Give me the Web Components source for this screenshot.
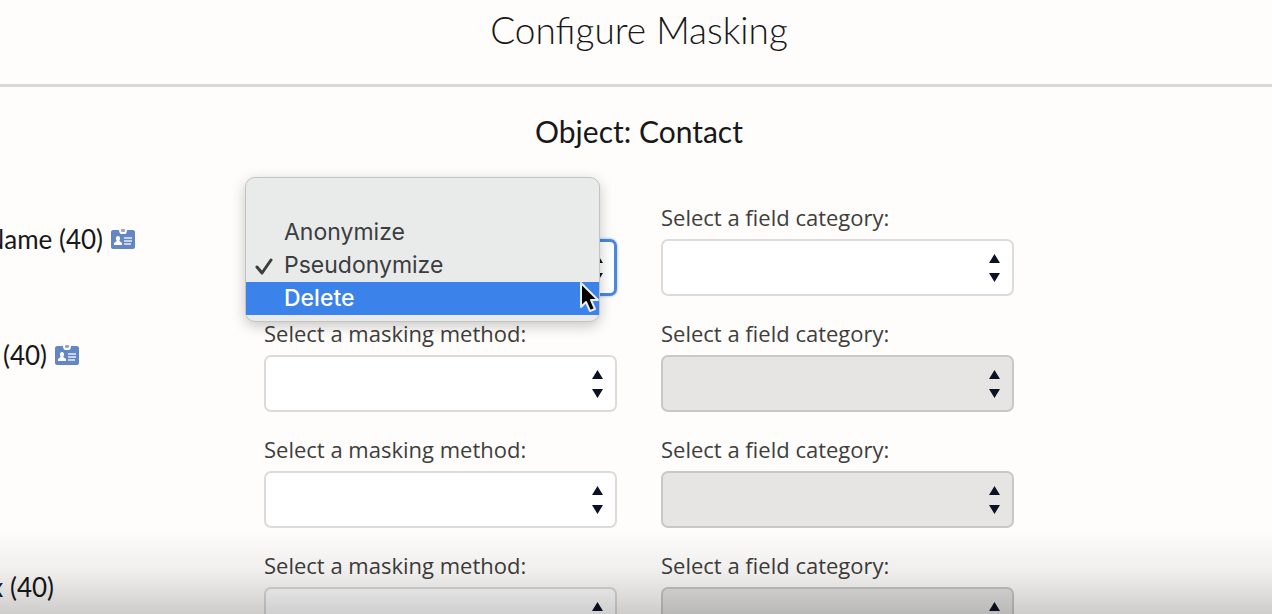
<!DOCTYPE html>
<html lang="en">
<head>
<meta charset="utf-8">
<title>Configure Masking</title>
<style>
  html, body {
    height: 100%;
  }

  body {
    margin: 0;
    overflow: hidden;
    background: #fefdfc;
    color: #181818;
    font-family: Lato, "Open Sans", sans-serif;
  }
</style>
</head>
<body>
<masking-page>
  <span slot="title">Configure Masking</span>
  <span slot="object">Object: Contact</span>

  <masking-row style="--name-width: 135px">
    <field-name slot="name" pii>Name (40)</field-name>
    <select-field slot="method" focused>
      <option-menu slot="menu">
        <menu-option></menu-option>
        <menu-option>Anonymize</menu-option>
        <menu-option checked>Pseudonymize</menu-option>
        <menu-option active>Delete</menu-option>
      </option-menu>
    </select-field>
    <select-field slot="category" label="Select a field category:"></select-field>
  </masking-row>

  <masking-row style="--name-width: 79px">
    <field-name slot="name" pii>(40)</field-name>
    <select-field slot="method" label="Select a masking method:"></select-field>
    <select-field slot="category" label="Select a field category:" disabled></select-field>
  </masking-row>

  <masking-row>
    <select-field slot="method" label="Select a masking method:"></select-field>
    <select-field slot="category" label="Select a field category:" disabled></select-field>
  </masking-row>

  <masking-row style="--name-width: 54px">
    <field-name slot="name">x (40)</field-name>
    <select-field slot="method" label="Select a masking method:"></select-field>
    <select-field slot="category" label="Select a field category:" disabled></select-field>
  </masking-row>
</masking-page>

<script>
class MaskingPage extends HTMLElement {
  constructor() {
    super();
    this.shadowDOM = this.attachShadow({ mode: "open" });
  }

  connectedCallback() {
    this.render();
  }

  render() {
    this.shadowDOM.innerHTML = `
      <style>
      :host {
        display: block;
      }

      header {
        padding: 6px 0 30px 6px;
        border-bottom: 3px solid #d9d8d6;
        text-align: center;
      }

      h1 {
        margin: 0;
        font-size: 37px;
        line-height: 48px;
        font-weight: 300;
      }

      h2 {
        margin: 0;
        padding: 26px 0 54px 6px;
        font-size: 30px;
        line-height: 37px;
        font-weight: 400;
        text-align: center;
      }

      .rows {
        display: grid;
        gap: 24px;
      }

      .fade {
        position: fixed;
        left: 0;
        right: 0;
        bottom: 0;
        height: 84px;
        background: linear-gradient(rgba(0, 0, 0, 0), rgba(0, 0, 0, 0.06) 50%, rgba(0, 0, 0, 0.19));
        pointer-events: none;
      }
      </style>
      <header><h1><slot name="title"></slot></h1></header>
      <main>
        <h2><slot name="object"></slot></h2>
        <div class="rows"><slot></slot></div>
      </main>
      <div class="fade"></div>`;
  }
}

class MaskingRow extends HTMLElement {
  constructor() {
    super();
    this.shadowDOM = this.attachShadow({ mode: "open" });
  }

  connectedCallback() {
    this.render();
  }

  render() {
    this.shadowDOM.innerHTML = `
      <style>
      :host {
        display: grid;
        grid-template-columns: minmax(0, 220fr) minmax(0, 353fr) minmax(0, 353fr) minmax(0, 214fr);
        column-gap: 44px;
        align-items: end;
      }

      .name {
        align-self: start;
        display: flex;
        justify-content: flex-end;
        width: var(--name-width, 100%);
        padding-top: 20px;
      }
      </style>
      <div class="name"><slot name="name"></slot></div>
      <slot name="method"></slot>
      <slot name="category"></slot>`;
  }
}

class FieldName extends HTMLElement {
  constructor() {
    super();
    this.shadowDOM = this.attachShadow({ mode: "open" });
  }

  connectedCallback() {
    this.render();
  }

  render() {
    const badge = `
      <svg width="24" height="20" viewBox="0 0 24 20" aria-hidden="true">
        <path fill="#6486c2" d="M2 1h6c0 2 1 4 2 4h4c1 0 2-2 2-4h6c1 0 2 1 2 2v15c0 1-1 2-2 2H2c-1 0-2-1-2-2V3c0-1 1-2 2-2z"/>
        <rect x="10" y="0" width="4" height="3" rx="1" fill="#8fa8d4"/>
        <path fill="#fff" d="M7 7c1.500 0 2 1 2 2.500S8.500 11 8.300 12l2.700 2v2H3v-2l2.700-2C5.500 11 5 11 5 9.500S5.500 7 7 7z"/>
        <path fill="#c6d3ec" d="M13 8h8v2h-8zM13 11h8v2h-8zM13 14h7v2h-7z"/>
      </svg>`;
    this.shadowDOM.innerHTML = `
      <style>
      :host {
        display: flex;
        align-items: center;
        gap: 8px;
        font-size: 26px;
        line-height: 30px;
        white-space: nowrap;
      }

      svg {
        flex: none;
      }
      </style>
      <span><slot></slot></span>${this.hasAttribute("pii") ? badge : ""}`;
  }
}

class SelectField extends HTMLElement {
  constructor() {
    super();
    this.shadowDOM = this.attachShadow({ mode: "open" });
  }

  connectedCallback() {
    this.render();
  }

  render() {
    const label = this.getAttribute("label");
    this.shadowDOM.innerHTML = `
      <style>
      :host {
        display: grid;
        gap: 8px;
        position: relative;
      }

      label {
        color: #3e3e3c;
        font-family: "Open Sans", sans-serif;
        font-size: 22px;
        line-height: 27px;
        white-space: nowrap;
      }

      .control {
        display: grid;
        align-items: center;
      }

      .control > * {
        grid-area: 1 / 1;
      }

      select {
        appearance: none;
        box-sizing: border-box;
        width: 100%;
        height: 57px;
        margin: 0;
        padding: 0 40px 0 16px;
        border: 2px solid #dddbda;
        border-radius: 7px;
        background: #fff;
        font: inherit;
        font-size: 22px;
      }

      select:disabled {
        border-color: #c9c8c6;
        background: #e6e5e4;
        opacity: 1;
      }

      :host([focused]) select {
        border: 3px solid #4a87dc;
        box-shadow: 0 0 3px #8db4ec;
      }

      svg {
        justify-self: end;
        margin-right: 14px;
        pointer-events: none;
      }
      </style>
      ${label ? `<label for="field">${label}</label>` : ""}
      <div class="control">
        <select id="field" ${label ? "" : 'aria-label="Masking method"'} ${this.hasAttribute("disabled") ? "disabled" : ""}>
          <option></option>
        </select>
        <svg width="11" height="28" viewBox="0 0 11 28" fill="#0b1226" aria-hidden="true">
          <path d="M5.500 0L11 9H0zM0 19h11l-5.500 9z"/>
        </svg>
      </div>
      <slot name="menu"></slot>`;
  }
}

class OptionMenu extends HTMLElement {
  constructor() {
    super();
    this.shadowDOM = this.attachShadow({ mode: "open" });
  }

  connectedCallback() {
    this.render();
  }

  render() {
    this.shadowDOM.innerHTML = `
      <style>
      :host {
        display: block;
        position: absolute;
        z-index: 1;
        top: -62px;
        left: -19px;
        right: 17px;
      }

      .list {
        padding: 5px 0 6px;
        border: 1px solid #c3c3c2;
        border-radius: 10px;
        background: #e9ebeb;
        box-shadow: 0 4px 14px rgba(0, 0, 0, 0.22);
      }

      /* mouse pointer resting on the active option */
      .pointer {
        position: absolute;
        right: 1px;
        bottom: 7px;
      }
      </style>
      <div class="list" role="listbox" aria-label="Masking method"><slot></slot></div>
      <svg class="pointer" width="20" height="34" viewBox="0 0 20 34" aria-hidden="true">
        <path d="M2 2v24l5-5 4 9 5-2-4-9h7z" fill="#000" stroke="#e8eefa" stroke-width="2" stroke-linejoin="round"/>
      </svg>`;
  }
}

class MenuOption extends HTMLElement {
  constructor() {
    super();
    this.shadowDOM = this.attachShadow({ mode: "open" });
  }

  connectedCallback() {
    this.render();
  }

  render() {
    const checked = this.hasAttribute("checked");
    this.shadowDOM.innerHTML = `
      <style>
      :host {
        display: block;
      }

      button {
        display: grid;
        grid-template-columns: 30px 1fr;
        align-items: center;
        width: 100%;
        height: 33px;
        margin: 0;
        padding: 0 8px;
        border: 0;
        background: none;
        color: #3c3d3e;
        font-family: Inter, sans-serif;
        font-size: 23px;
        line-height: 33px;
        text-align: left;
      }

      :host([active]) button {
        background: #3b82ea;
        color: #fff;
        font-weight: 500;
      }

      span {
        grid-column: 2;
        grid-row: 1;
      }
      </style>
      <button type="button" role="option" aria-selected="${checked}">
        ${checked ? `<svg width="20" height="18" viewBox="0 0 20 18" aria-hidden="true"><path d="M3 10l5 6L17 3" fill="none" stroke="#3c3d3e" stroke-width="3" stroke-linecap="round" stroke-linejoin="round"/></svg>` : ""}
        <span><slot></slot></span>
      </button>`;
  }
}

customElements.define("masking-page", MaskingPage);
customElements.define("masking-row", MaskingRow);
customElements.define("field-name", FieldName);
customElements.define("select-field", SelectField);
customElements.define("option-menu", OptionMenu);
customElements.define("menu-option", MenuOption);
</script>
</body>
</html>
